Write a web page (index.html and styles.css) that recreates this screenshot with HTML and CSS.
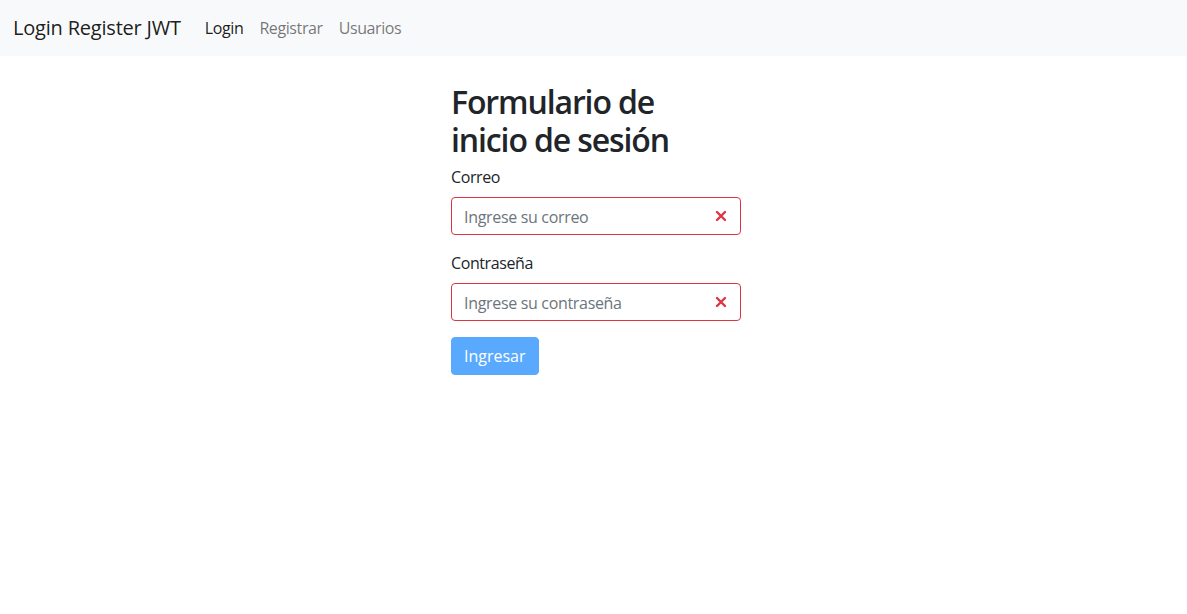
FILE: index.html
```html
<!DOCTYPE html>
<html lang="es">
<head>
<meta charset="utf-8">
<title>Login Register JWT</title>
<link rel="stylesheet" href="styles.css">
</head>
<body>
<nav class="navbar">
  <a class="brand" href="#">Login Register JWT</a>
  <ul class="nav">
    <li><a class="nav-link active" href="#">Login</a></li>
    <li><a class="nav-link" href="#">Registrar</a></li>
    <li><a class="nav-link" href="#">Usuarios</a></li>
  </ul>
</nav>
<main class="page">
  <form class="login">
    <h2 class="title">Formulario de inicio de sesión</h2>
    <div class="group">
      <label class="label" for="correo">Correo</label>
      <div class="field">
        <input class="input" id="correo" type="email" placeholder="Ingrese su correo">
        <svg class="icon" viewBox="0 0 12 12" width="12" height="12"><path d="M2 2L10 10M10 2L2 10" stroke="#dc3545" stroke-width="2.4" stroke-linecap="round"/></svg>
      </div>
    </div>
    <div class="group">
      <label class="label" for="clave">Contraseña</label>
      <div class="field">
        <input class="input" id="clave" type="password" placeholder="Ingrese su contraseña">
        <svg class="icon" viewBox="0 0 12 12" width="12" height="12"><path d="M2 2L10 10M10 2L2 10" stroke="#dc3545" stroke-width="2.4" stroke-linecap="round"/></svg>
      </div>
    </div>
    <button class="btn" type="button" disabled>Ingresar</button>
  </form>
</main>
</body>
</html>
```

FILE: styles.css
```css
* { box-sizing: border-box; }
html, body {
  margin: 0;
  padding: 0;
  background: #fff;
  font-family: "Open Sans", "Noto Sans", sans-serif;
  font-size: 16px;
  line-height: 1.5;
  letter-spacing: -0.025em;
  color: #212529;
}
.navbar {
  height: 56px;
  background: #f8f9fa;
  display: flex;
  align-items: center;
  padding: 0 13px;
}
.brand {
  font-size: 20px;
  letter-spacing: -0.01em;
  color: rgba(0,0,0,.9);
  text-decoration: none;
  margin-right: 16px;
  padding: 5px 0;
  line-height: 30px;
}
.nav {
  list-style: none;
  margin: 0;
  padding: 0;
  display: flex;
}
.nav-link {
  display: block;
  padding: 8px;
  color: rgba(0,0,0,.55);
  text-decoration: none;
}
.nav-link.active { color: rgba(0,0,0,.9); }
.page {
  display: flex;
  padding-left: 451px;
  padding-top: 27px;
}
.login { width: 290px; }
.title {
  font-size: 32px;
  font-weight: 600;
  line-height: 1.2;
  letter-spacing: -0.035em;
  margin: 0 0 5px;
  max-width: 240px;
}
.group { margin-bottom: 16px; }
.label {
  display: block;
  margin-bottom: 8px;
}
.field {
  position: relative;
}
.input {
  display: block;
  width: 100%;
  height: 38px;
  padding: 7px 36px 5px 12px;
  font: inherit;
  letter-spacing: -0.02em;
  color: #212529;
  border: 1px solid #dc3545;
  border-radius: 4px;
  background: #fff;
  outline: none;
}
.input::placeholder { color: #6c757d; }
.icon {
  position: absolute;
  right: 14px;
  top: 13px;
}
.btn {
  font: inherit;
  color: #fff;
  background: #59a9ff;
  border: 1px solid #59a9ff;
  border-radius: 4px;
  padding: 6px 12px;
  height: 38px;
  line-height: 24px;
}
```
